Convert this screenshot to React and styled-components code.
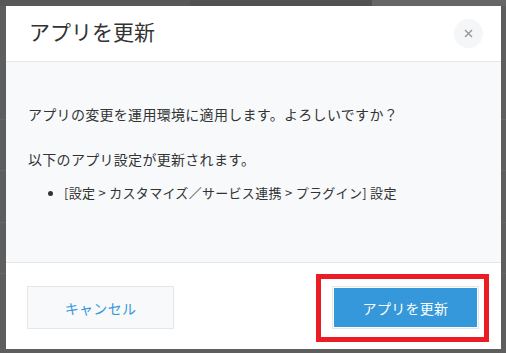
import React from "react";
import styled, { createGlobalStyle } from "styled-components";

const GlobalStyle = createGlobalStyle`
	html, body {
		margin: 0;
		padding: 0;
	}
	body {
		font-family: "Noto Sans CJK JP", "Noto Sans", "Liberation Sans", sans-serif;
		color: #333;
	}
`;

const Backdrop = styled.div`
	width: 506px;
	height: 353px;
	box-sizing: border-box;
	padding: 6px 5px 4px 6px;
	background-color: #5e5e5e;
	background-image:
		linear-gradient(to right, #585858 0 190px, #515151 190px 372px, #666 372px),
		linear-gradient(#676767, #676767),
		linear-gradient(#676767, #676767),
		linear-gradient(#676767, #676767),
		linear-gradient(#676767, #676767);
	background-size: 100% 6px, 100% 1px, 100% 1px, 100% 1px, 100% 1px;
	background-position: 0 0, 0 119px, 0 170px, 0 222px, 0 273px;
	background-repeat: no-repeat;
	overflow: hidden;
`;

const Modal = styled.div`
	width: 495px;
	height: 343px;
	background: #fff;
	display: flex;
	flex-direction: column;
`;

const Header = styled.header`
	height: 56px;
	box-sizing: border-box;
	border-bottom: 1px solid #e3e7e8;
	display: flex;
	align-items: center;
	justify-content: space-between;
	padding: 0 18px 0 23px;
`;

const Title = styled.h1`
	margin: 0 0 5px;
	font-size: 21px;
	font-weight: 400;
	line-height: 28px;
	color: #333;
`;

const CloseButton = styled.button`
	width: 29px;
	height: 29px;
	border: none;
	border-radius: 50%;
	background: #f5f6f8;
	padding: 0;
	display: flex;
	align-items: center;
	justify-content: center;
	cursor: pointer;
`;

const Body = styled.section`
	flex: 1;
	background: #f7f9fa;
	padding: 42px 22px 0;
	font-size: 14px;
	line-height: 20px;
`;

const Text = styled.p`
	margin: 0 0 ${(p) => p.$gap || 0}px;
	letter-spacing: 0.3px;
`;

const List = styled.ul`
	margin: 14px 0 0;
	padding-left: 36px;
`;

const Item = styled.li`
	font-size: 13px;
	letter-spacing: 0.3px;
	&::marker {
		font-size: 12px;
	}
`;

const Footer = styled.footer`
	height: 87px;
	box-sizing: border-box;
	border-top: 1px solid #e3e7e8;
	display: flex;
	align-items: flex-start;
	justify-content: space-between;
	padding: 23px 22px 0 21px;
`;

const Button = styled.button`
	width: 147px;
	height: 43px;
	box-sizing: border-box;
	border: 1px solid #e3e7e8;
	padding: ${(p) => (p.$primary ? "1px" : "0")};
	background: ${(p) => (p.$primary ? "#3498db" : "#f7f9fa")};
	background-clip: content-box;
	color: ${(p) => (p.$primary ? "#fff" : "#3498db")};
	font-family: inherit;
	font-size: 14px;
	letter-spacing: 0.3px;
	cursor: pointer;
`;

const Highlight = styled.div`
	margin: -12px -10px 0 0;
	padding: 7px 5px 8px 11px;
	border: 5px solid #ec1c24;
	display: flex;
`;

export default function App() {
	return (
		<>
			<GlobalStyle />
			<Backdrop>
				<Modal>
					<Header>
						<Title>アプリを更新</Title>
						<CloseButton aria-label="閉じる">
							<svg width="9" height="9" viewBox="0 0 9 9">
								<path d="M1 1L8 8M8 1L1 8" stroke="#9a9a9a" strokeWidth="1.5" />
							</svg>
						</CloseButton>
					</Header>
					<Body>
						<Text $gap={25}>アプリの変更を運用環境に適用します。よろしいですか？</Text>
						<Text>以下のアプリ設定が更新されます。</Text>
						<List>
							<Item>[設定 &gt; カスタマイズ／サービス連携 &gt; プラグイン] 設定</Item>
						</List>
					</Body>
					<Footer>
						<Button>キャンセル</Button>
						<Highlight>
							<Button $primary>アプリを更新</Button>
						</Highlight>
					</Footer>
				</Modal>
			</Backdrop>
		</>
	);
}
